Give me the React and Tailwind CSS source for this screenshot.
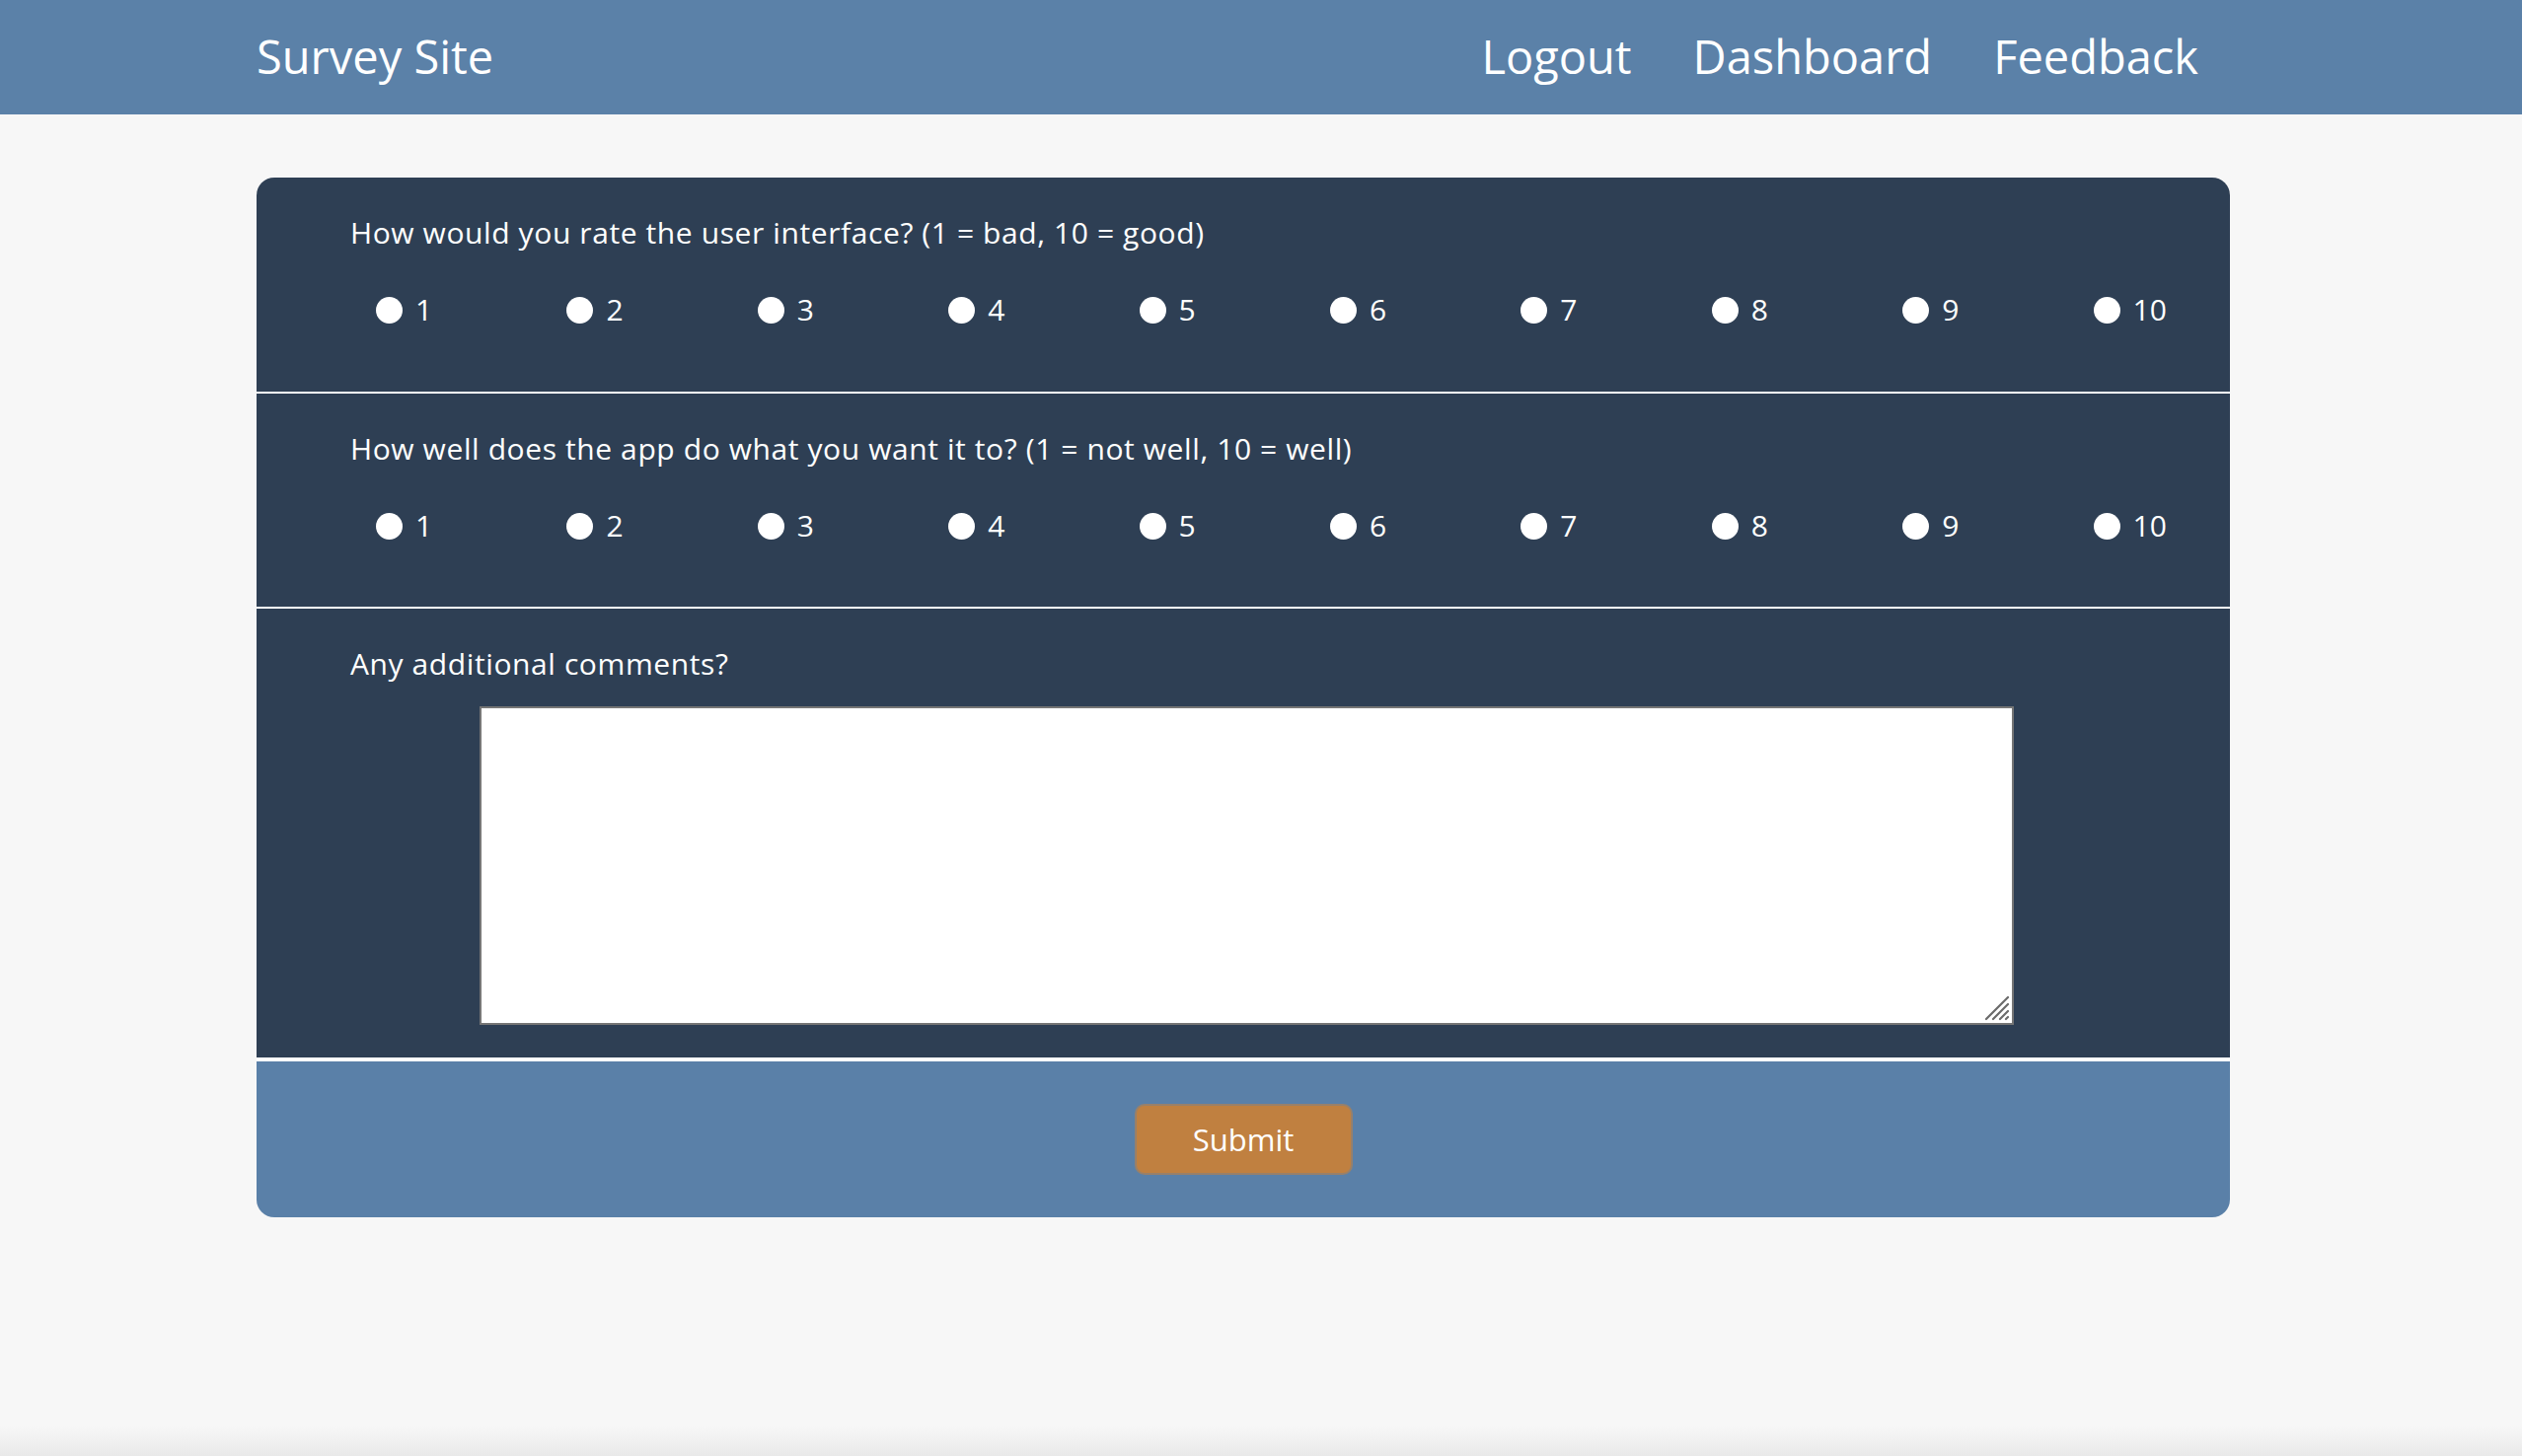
import React from "react";

const font = { fontFamily: '"Open Sans", "Noto Sans", Lato, sans-serif' };

function RadioRow({ name }) {
  const nums = [1, 2, 3, 4, 5, 6, 7, 8, 9, 10];
  return (
    <div className="ml-[26px] grid grid-cols-[repeat(9,193.4px)_auto] h-[36px] items-center">
      {nums.map((n) => (
        <label key={n} className="flex items-center gap-[13px] text-[30px] leading-[36px] text-white">
          <input
            type="radio"
            name={name}
            value={n}
            className="appearance-none w-[27px] h-[27px] rounded-full bg-white m-0 shrink-0"
          />
          <span>{n}</span>
        </label>
      ))}
    </div>
  );
}

function Question({ text, name, h }) {
  return (
    <div className={`bg-[#2e3f54] ${h} pt-[38px] pl-[95px]`}>
      <div className="text-[30px] tracking-[0.6px] leading-[36px] text-white">{text}</div>
      <div className="mt-[42px]">
        <RadioRow name={name} />
      </div>
    </div>
  );
}

export default function App() {
  return (
    <div className="h-[1476px] bg-[#f7f7f7] flex flex-col" style={font}>
      <header className="h-[116px] bg-[#5b81a8] shrink-0">
        <div className="ml-[260px] w-[2000px] h-full flex items-center justify-between pb-[2px]">
          <div className="text-[47px] text-white leading-none">Survey Site</div>
          <nav className="flex items-center gap-[62px] pr-[32px] text-[47px] text-white leading-none">
            <a>Logout</a>
            <a>Dashboard</a>
            <a>Feedback</a>
          </nav>
        </div>
      </header>

      <main className="ml-[260px] w-[2000px] mt-[64px] rounded-[18px] overflow-hidden flex flex-col">
        <Question h="h-[217px]" name="ui" text="How would you rate the user interface? (1 = bad, 10 = good)" />
        <div className="h-[2px] bg-white" />
        <Question h="h-[216px]" name="function" text="How well does the app do what you want it to? (1 = not well, 10 = well)" />
        <div className="h-[2px] bg-white" />
        <div className="bg-[#2e3f54] h-[455px] pt-[38px] pl-[95px]">
          <div className="text-[30px] tracking-[0.6px] leading-[36px] text-white">Any additional comments?</div>
          <div className="relative mt-[25px] ml-[131px] w-[1555px] h-[323px]">
            <textarea className="block w-full h-full bg-white border-2 border-[#767676] outline-none resize-none" />
            <svg className="absolute right-[4px] bottom-[4px] pointer-events-none" width="26" height="26" viewBox="0 0 26 26">
              <g stroke="#6b6b6b" strokeWidth="2.2" strokeLinecap="round">
                <line x1="2" y1="24" x2="24" y2="2" />
                <line x1="9" y1="24" x2="24" y2="9" />
                <line x1="16" y1="24" x2="24" y2="16" />
                <line x1="22" y1="24" x2="24" y2="22" />
              </g>
            </svg>
          </div>
        </div>
        <div className="h-[4px] bg-white" />
        <div className="bg-[#5a80a8] h-[158px] flex items-center justify-center">
          <button className="w-[221px] h-[72px] rounded-[10px] bg-[#c08040] border-2 border-[#98806a] text-white text-[31px]">
            Submit
          </button>
        </div>
      </main>

      <div className="flex-1" />
      <div className="h-[30px] bg-gradient-to-b from-[#f7f7f7] to-[#e9e9e9]" />
    </div>
  );
}
